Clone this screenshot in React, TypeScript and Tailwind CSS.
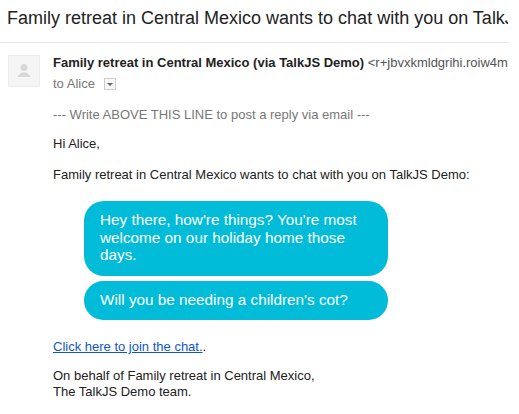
import React from 'react';

const App: React.FC = () => {
  return (
    <div className="w-[519px] h-[414px] bg-white overflow-hidden font-['Liberation_Sans',Arial,sans-serif] text-[13px] text-[#222222]">
      <div className="w-[508px] overflow-hidden">
        <div className="h-[43px] border-b border-[#e5e5e5] pl-[7px] pt-[6px] text-[18px] leading-[24px] whitespace-nowrap">
          Family retreat in Central Mexico wants to chat with you on TalkJS Demo
        </div>

        <div className="flex pl-2 pt-3">
          <div className="w-[32px] h-[32px] shrink-0 mr-[13px] bg-[#f5f5f5] border border-[#ececec] flex items-center justify-center">
            <svg width="16" height="18" viewBox="0 0 16 18">
              <circle cx="8" cy="5.5" r="3.5" fill="#d8d8d8" />
              <path d="M2 15c0-3 3-4.500 6-4.500s6 1.500 6 4.500z" fill="#d8d8d8" />
            </svg>
          </div>

          <div className="min-w-0 flex-1">
            <div className="leading-[16px] whitespace-nowrap">
              <span className="font-bold">Family retreat in Central Mexico (via TalkJS Demo)</span>{' '}
              <span className="text-[#555555]">&lt;r+jbvxkmldgrihi.roiw4m7kq@talkjs.com&gt;</span>
            </div>
            <div className="flex items-center mt-[5px] leading-[16px] text-[#777777]">
              <span>to Alice</span>
              <span className="ml-[9px] w-[12px] h-[12px] border border-[#cfcfcf] bg-[#f6f6f6] flex items-center justify-center">
                <span className="w-0 h-0 border-x-[3px] border-x-transparent border-t-[3px] border-t-[#666666]" />
              </span>
            </div>

            <p className="mt-[15px] leading-[16px] text-[#777777]">--- Write ABOVE THIS LINE to post a reply via email ---</p>
            <p className="mt-[13px] leading-[16px]">Hi Alice,</p>
            <p className="mt-[15px] leading-[16px]">Family retreat in Central Mexico wants to chat with you on TalkJS Demo:</p>

            <div className="ml-[31px] mt-[18px] w-[304px] flex flex-col gap-[5px] text-[15.3px] leading-[17.5px] text-white">
              <div className="bg-[#00bcd8] rounded-[20px] px-4 pt-[10px] pb-[12.5px]">
                Hey there, how're things? You're most welcome on our holiday home those days.
              </div>
              <div className="bg-[#00bcd8] rounded-[20px] px-4 pt-[10px] pb-[11.5px]">
                Will you be needing a children's cot?
              </div>
            </div>

            <p className="mt-[19px] leading-[16px]">
              <a href="#" className="text-[#1155cc] underline">Click here to join the chat.</a>.
            </p>
            <p className="mt-[13px] leading-[15.5px]">
              On behalf of Family retreat in Central Mexico,
              <br />
              The TalkJS Demo team.
            </p>
          </div>
        </div>
      </div>
    </div>
  );
};

export default App;
